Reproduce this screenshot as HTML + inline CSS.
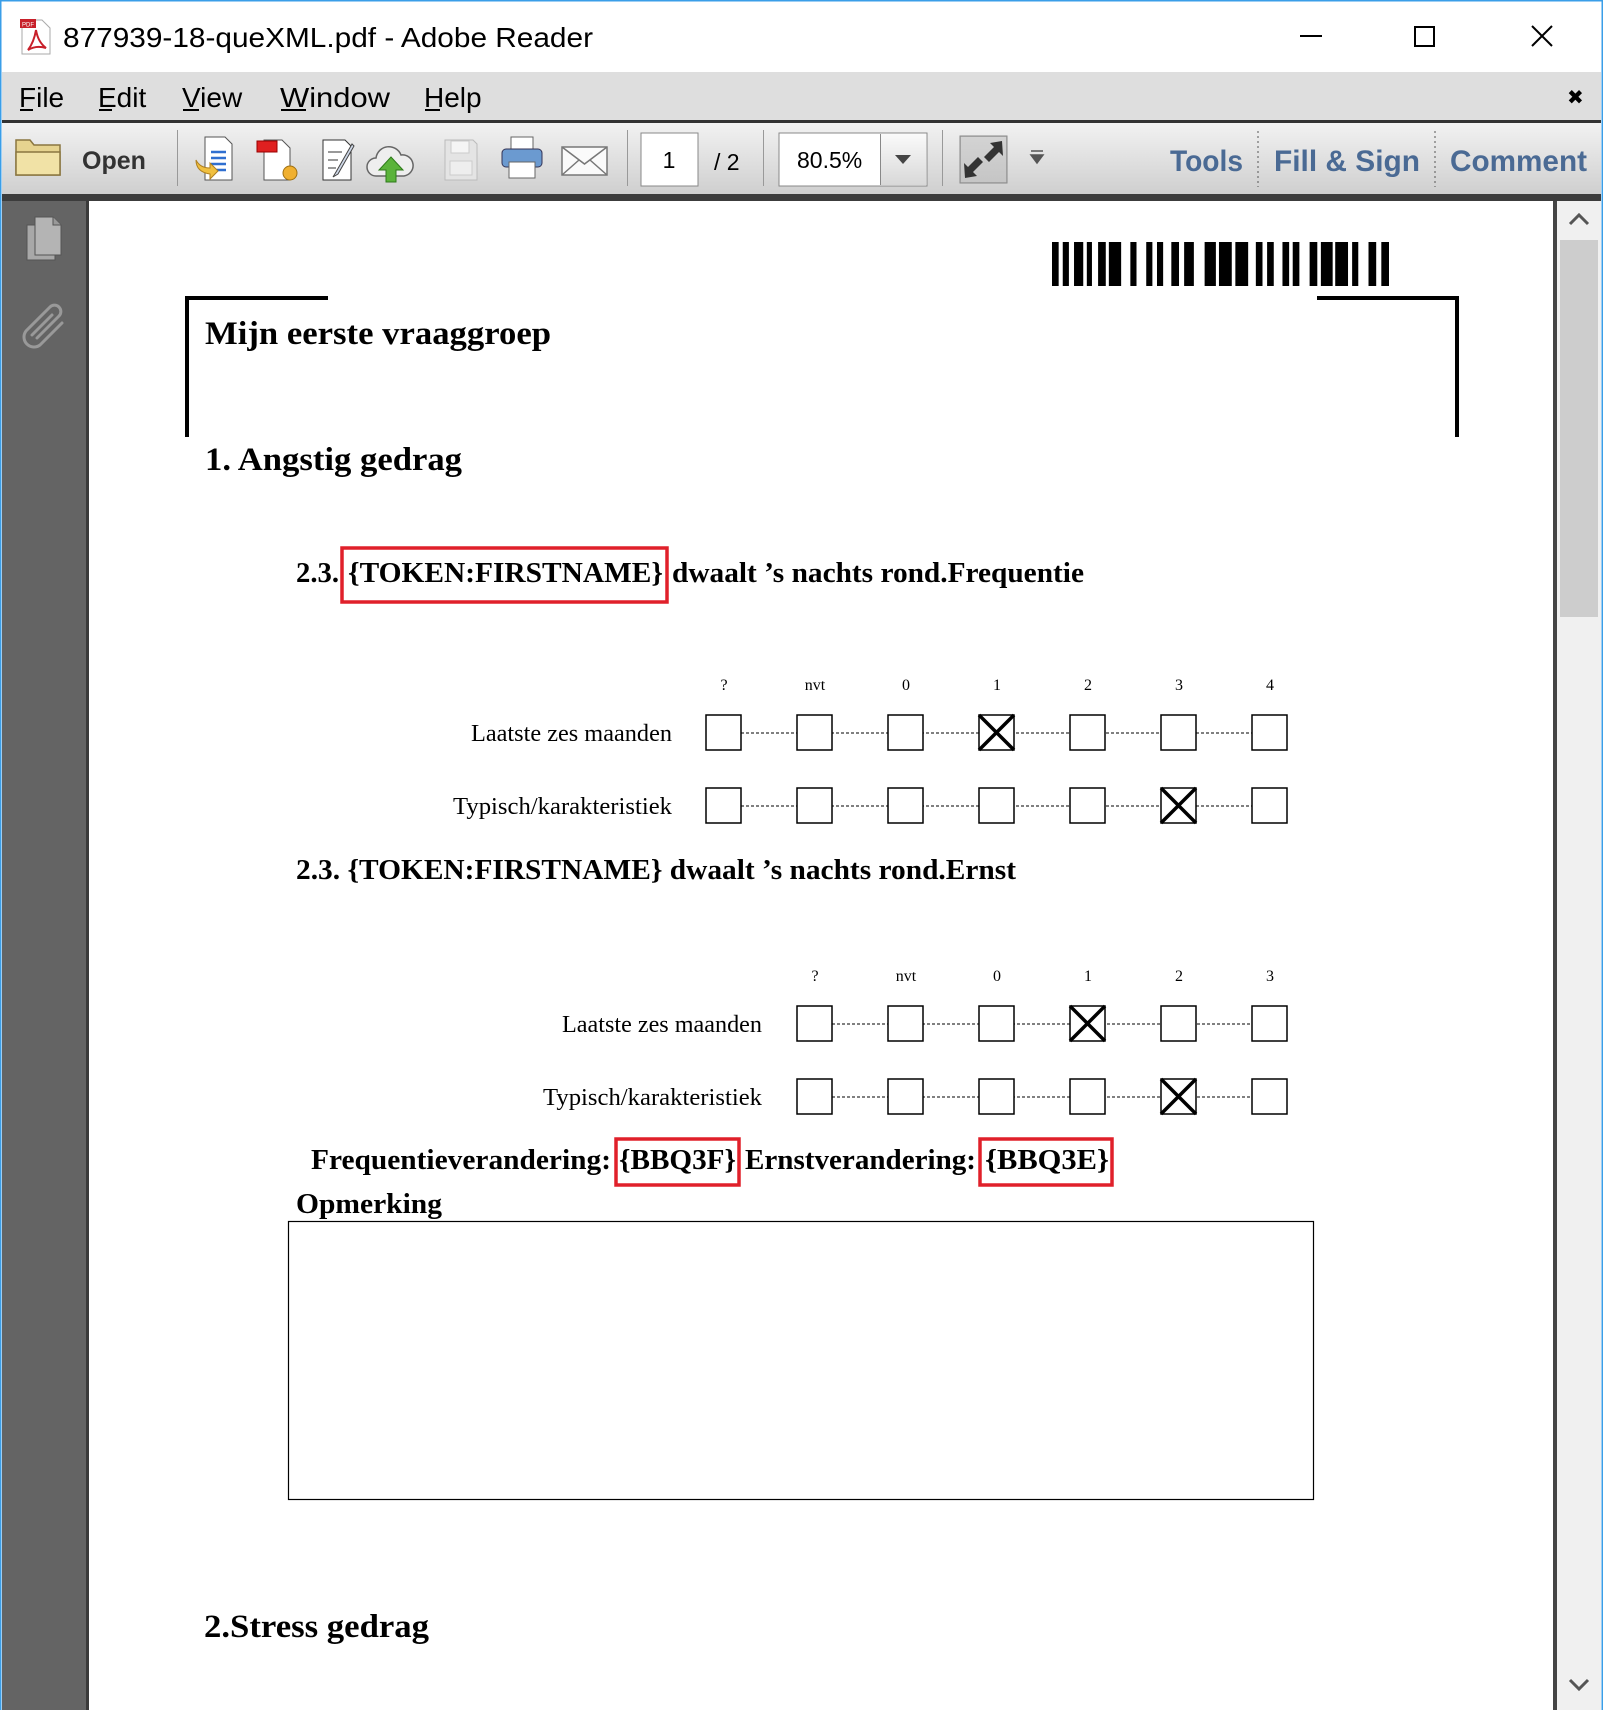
<!DOCTYPE html>
<html><head><meta charset="utf-8"><style>
html,body{margin:0;padding:0;width:1603px;height:1710px;overflow:hidden;background:#fff}
svg{display:block}
.ui{font-family:"Liberation Sans","DejaVu Sans",sans-serif}
.doc{font-family:"Liberation Serif",serif}
</style></head><body>
<svg width="1603" height="1710" viewBox="0 0 1603 1710" xmlns="http://www.w3.org/2000/svg">
<rect x="0" y="0" width="1603" height="1710" fill="#fff"/>
<rect x="0" y="0" width="1603" height="72" fill="#fff"/>
<g transform="translate(20,18)">
 <path d="M2 2 h20 l8 8 v26 h-28z" fill="#fff" stroke="#aaa"/>
 <rect x="0" y="1" width="16" height="9" fill="#c8202a"/>
 <text x="2" y="8.5" font-size="6" fill="#fff" class="ui">PDF</text>
 <path d="M8 32 q6 -8 8 -20 q2 12 10 18 q-10 -3 -18 2z" fill="none" stroke="#c8202a" stroke-width="2"/>
</g>
<text x="63" y="47" font-size="28" class="ui" fill="#000" textLength="530" lengthAdjust="spacingAndGlyphs">877939-18-queXML.pdf - Adobe Reader</text>
<rect x="1300" y="35" width="22" height="2" fill="#000"/>
<rect x="1415" y="27" width="19" height="19" fill="none" stroke="#000" stroke-width="2"/>
<path d="M1532 26 L1552 46 M1552 26 L1532 46" stroke="#000" stroke-width="2"/>
<rect x="2" y="72" width="1599" height="48" fill="#dedede"/>
<g class="ui" font-size="28" fill="#000">
 <text x="19" y="107">File</text><rect x="20" y="109" width="13" height="2"/>
 <text x="98" y="107">Edit</text><rect x="99" y="109" width="13" height="2"/>
 <text x="182" y="107">View</text><rect x="183" y="109" width="16" height="2"/>
 <text x="280" y="107" textLength="110" lengthAdjust="spacingAndGlyphs">Window</text><rect x="281" y="109" width="25" height="2"/>
 <text x="424" y="107">Help</text><rect x="425" y="109" width="15" height="2"/>
</g>
<text x="1567" y="104" font-size="20" font-weight="bold" class="ui" fill="#000">✖</text>
<defs>
<linearGradient id="tb" x1="0" y1="0" x2="0" y2="1"><stop offset="0" stop-color="#f2f2f2"/><stop offset="1" stop-color="#cfcfcf"/></linearGradient>
<linearGradient id="dd" x1="0" y1="0" x2="0" y2="1"><stop offset="0" stop-color="#fafafa"/><stop offset="1" stop-color="#d8d8d8"/></linearGradient>
</defs>
<rect x="2" y="120" width="1599" height="3" fill="#333"/>
<rect x="2" y="123" width="1599" height="71" fill="url(#tb)"/>
<rect x="2" y="194" width="1599" height="7" fill="#3c3c3c"/>
<path d="M16 140 h14 l4 5 h26 v30 h-44z" fill="#e6d38f" stroke="#8a7640" stroke-width="1.5"/>
<path d="M16 152 h44 v23 h-44z" fill="#f1e2a6" stroke="#8a7640" stroke-width="1.5"/>
<text x="82" y="169" font-size="25" font-weight="bold" class="ui" fill="#333">Open</text>
<rect x="177" y="130" width="1" height="56" fill="#999"/>
<g>
 <path d="M205 137 h20 l7 7 v36 h-27z" fill="#fff" stroke="#555"/>
 <path d="M211 152 h15 M211 158 h15 M211 164 h15 M211 170 h15" stroke="#2f6fd0" stroke-width="2.5"/>
 <path d="M196 160 q0 12 14 14 l0 5 l8 -8 l-8 -8 v5 q-10 0 -14 -8z" fill="#f0c040" stroke="#b08020"/>
 <path d="M264 140 h18 l8 8 v32 h-26z" fill="#fff" stroke="#555"/>
 <rect x="257" y="141" width="20" height="11" fill="#e02020" stroke="#900"/>
 <circle cx="290" cy="173" r="7" fill="#f0b030" stroke="#a07010"/>
 <path d="M323 140 h22 l6 6 v34 h-28z" fill="#fff" stroke="#333"/>
 <path d="M328 152 h14 M328 160 h10 M328 168 h8" stroke="#999" stroke-width="2"/>
 <path d="M352 144 l-16 28 l-3 5 l5 -3 l16 -28z" fill="#cfd8e8" stroke="#444"/>
 <path d="M388 176 h-12 a9 9 0 0 1 0 -18 a13 13 0 0 1 25 -3 a9 9 0 0 1 3 21 h-10" fill="#eee" stroke="#666" stroke-width="1.5"/>
 <path d="M396 182 v-12 h7 l-12 -13 l-12 13 h7 v12z" fill="#5ab33a" stroke="#2d7a1a"/>
 <path d="M445 140 h28 l4 4 v36 h-32z" fill="#e4e4e4" stroke="#bbb"/>
 <rect x="451" y="141" width="18" height="12" fill="#f5f5f5" stroke="#ccc"/>
 <rect x="450" y="161" width="22" height="14" fill="#eee" stroke="#ccc"/>
 <rect x="511" y="137" width="22" height="14" fill="#fff" stroke="#666"/>
 <rect x="502" y="149" width="40" height="18" rx="4" fill="#6b9ad0" stroke="#335"/>
 <rect x="509" y="162" width="26" height="16" fill="#fff" stroke="#666"/>
 <rect x="562" y="147" width="45" height="28" fill="#fafafa" stroke="#777" stroke-width="1.5"/>
 <path d="M562 147 l22.5 17 l22.5 -17 M562 175 l17 -15 M607 175 l-17 -15" fill="none" stroke="#777" stroke-width="1.5"/>
</g>
<rect x="627" y="130" width="1" height="56" fill="#999"/>
<rect x="641" y="133" width="57" height="53" fill="#fff" stroke="#888"/>
<text x="669" y="168" font-size="23" class="ui" text-anchor="middle" fill="#000">1</text>
<text x="714" y="170" font-size="23" class="ui" fill="#000">/  2</text>
<rect x="763" y="130" width="1" height="56" fill="#999"/>
<rect x="779" y="133" width="148" height="53" fill="#fff" stroke="#888"/>
<rect x="881" y="134" width="45" height="51" fill="url(#dd)"/>
<rect x="880" y="134" width="1" height="51" fill="#888"/>
<path d="M895 155 h16 l-8 9z" fill="#444"/>
<text x="797" y="168" font-size="23" class="ui" fill="#000">80.5%</text>
<rect x="942" y="130" width="1" height="56" fill="#999"/>
<rect x="960" y="136" width="47" height="47" fill="#b9b9b9" stroke="#888"/>
<rect x="961" y="137" width="45" height="45" fill="url(#dd)" opacity=".4"/>
<path d="M1002 141 l-12 2 l4 4 l-10 10 l5 5 l10 -10 l4 4z M965 178 l12 -2 l-4 -4 l10 -10 l-5 -5 l-10 10 l-4 -4z" fill="#333"/>
<path d="M1031 151 h12 M1031 155 h12 l-6 8z" stroke="#555" stroke-width="1.5" fill="#555"/>
<g class="ui" font-size="30" font-weight="bold" fill="#4a6a94">
 <text x="1170" y="171" textLength="73" lengthAdjust="spacingAndGlyphs">Tools</text>
 <text x="1274" y="171" textLength="146" lengthAdjust="spacingAndGlyphs">Fill &amp; Sign</text>
 <text x="1450" y="171" textLength="137" lengthAdjust="spacingAndGlyphs">Comment</text>
</g>
<path d="M1258 131 v56 M1435 131 v56" stroke="#555" stroke-dasharray="2 3"/>
<rect x="2" y="201" width="84" height="1509" fill="#646464"/>
<rect x="86" y="201" width="3" height="1509" fill="#3a3a3a"/>
<rect x="89" y="201" width="1464" height="1509" fill="#fff"/>
<rect x="1553" y="201" width="4" height="1509" fill="#444"/>
<rect x="1557" y="201" width="44" height="1509" fill="#f0f0f0"/>
<rect x="1560" y="240" width="38" height="377" fill="#cdcdcd"/>
<path d="M1570 224 l9 -9 l9 9" fill="none" stroke="#555" stroke-width="3"/>
<path d="M1570 1680 l9 9 l9 -9" fill="none" stroke="#555" stroke-width="3"/>
<rect x="27" y="225" width="28" height="35" fill="#a8a8a8" stroke="#555"/>
<path d="M35 217 h18 l8 8 v30 h-26z" fill="#b4b4b4" stroke="#555"/>
<path d="M53 217 v8 h8" fill="#999" stroke="#555"/>
<path d="M37 338 l22 -22 a6 6 0 0 0 -9 -9 l-24 24 a10 10 0 0 0 14 14 l22 -22 M32 335 l20 -20" fill="none" stroke="#999" stroke-width="3" stroke-linecap="round"/>
<rect x="0.5" y="0.5" width="1602" height="1712" fill="none" stroke="#3a9ee8" stroke-width="2"/>

<svg x="1052" y="242" width="337" height="44" viewBox="492 0 658 1" preserveAspectRatio="none">
<g fill="#000">
<rect x="492" y="0" width="13" height="1"/><rect x="513" y="0" width="12" height="1"/><rect x="535" y="0" width="18" height="1"/><rect x="560" y="0" width="10" height="1"/><rect x="582" y="0" width="15" height="1"/><rect x="603" y="0" width="24" height="1"/><rect x="645" y="0" width="12" height="1"/><rect x="676" y="0" width="12" height="1"/><rect x="697" y="0" width="12" height="1"/><rect x="725" y="0" width="15" height="1"/><rect x="750" y="0" width="19" height="1"/><rect x="790" y="0" width="22" height="1"/><rect x="818" y="0" width="25" height="1"/><rect x="850" y="0" width="25" height="1"/><rect x="890" y="0" width="13" height="1"/><rect x="912" y="0" width="13" height="1"/><rect x="942" y="0" width="13" height="1"/><rect x="962" y="0" width="13" height="1"/><rect x="995" y="0" width="15" height="1"/><rect x="1017" y="0" width="23" height="1"/><rect x="1045" y="0" width="25" height="1"/><rect x="1078" y="0" width="12" height="1"/><rect x="1110" y="0" width="15" height="1"/><rect x="1135" y="0" width="15" height="1"/>
</g></svg>
<path d="M187 437 V298 H328" fill="none" stroke="#000" stroke-width="4"/>
<path d="M1317 298 H1457 V437" fill="none" stroke="#000" stroke-width="4"/>
<g class="doc" font-weight="bold" fill="#000" lengthAdjust="spacingAndGlyphs">
 <text x="205" y="344" font-size="33" textLength="346" lengthAdjust="spacingAndGlyphs">Mijn eerste vraaggroep</text>
 <text x="205" y="470" font-size="33" textLength="257" lengthAdjust="spacingAndGlyphs">1. Angstig gedrag</text>
 <text x="296" y="582" font-size="28" textLength="43" lengthAdjust="spacingAndGlyphs">2.3.</text>
 <text x="348" y="582" font-size="28" textLength="315" lengthAdjust="spacingAndGlyphs">{TOKEN:FIRSTNAME}</text>
 <text x="672" y="582" font-size="28" textLength="412" lengthAdjust="spacingAndGlyphs">dwaalt ’s nachts rond.Frequentie</text>
 <text x="296" y="879" font-size="28" textLength="720" lengthAdjust="spacingAndGlyphs">2.3. {TOKEN:FIRSTNAME} dwaalt ’s nachts rond.Ernst</text>
 <text x="311" y="1169" font-size="28" textLength="300" lengthAdjust="spacingAndGlyphs">Frequentieverandering:</text>
 <text x="619" y="1169" font-size="28" textLength="117" lengthAdjust="spacingAndGlyphs">{BBQ3F}</text>
 <text x="745" y="1169" font-size="28" textLength="231" lengthAdjust="spacingAndGlyphs">Ernstverandering:</text>
 <text x="985" y="1169" font-size="28" textLength="124" lengthAdjust="spacingAndGlyphs">{BBQ3E}</text>
 <text x="296" y="1213" font-size="28" textLength="146" lengthAdjust="spacingAndGlyphs">Opmerking</text>
 <text x="204" y="1637" font-size="33" textLength="225" lengthAdjust="spacingAndGlyphs">2.Stress gedrag</text>
</g>
<rect x="342" y="548" width="325" height="54" fill="none" stroke="#e0202a" stroke-width="3.5"/>
<rect x="616" y="1139" width="123" height="46" fill="none" stroke="#e0202a" stroke-width="3.5"/>
<rect x="980" y="1139" width="132" height="46" fill="none" stroke="#e0202a" stroke-width="3.5"/>
<g class="doc" font-size="16" fill="#000" text-anchor="middle">
 <text x="724" y="690">?</text><text x="815" y="690">nvt</text><text x="906" y="690">0</text><text x="997" y="690">1</text><text x="1088" y="690">2</text><text x="1179" y="690">3</text><text x="1270" y="690">4</text>
 <text x="815" y="981">?</text><text x="906" y="981">nvt</text><text x="997" y="981">0</text><text x="1088" y="981">1</text><text x="1179" y="981">2</text><text x="1270" y="981">3</text>
</g>
<g class="doc" font-size="24" fill="#000">
 <text x="471" y="741" textLength="201" lengthAdjust="spacingAndGlyphs">Laatste zes maanden</text>
 <text x="453" y="814" textLength="219" lengthAdjust="spacingAndGlyphs">Typisch/karakteristiek</text>
 <text x="562" y="1032" textLength="200" lengthAdjust="spacingAndGlyphs">Laatste zes maanden</text>
 <text x="543" y="1105" textLength="219" lengthAdjust="spacingAndGlyphs">Typisch/karakteristiek</text>
</g>
<g stroke="#000" fill="none">
 <path d="M741 733 H1252 M741 806 H1252 M832 1024 H1252 M832 1097 H1252" stroke-dasharray="3 2" stroke-width="1"/>
</g>
<g fill="#fff" stroke="#000" stroke-width="1.5">
 <rect x="706" y="715" width="35" height="35"/><rect x="797" y="715" width="35" height="35"/><rect x="888" y="715" width="35" height="35"/><rect x="979" y="715" width="35" height="35"/><rect x="1070" y="715" width="35" height="35"/><rect x="1161" y="715" width="35" height="35"/><rect x="1252" y="715" width="35" height="35"/>
 <rect x="706" y="788" width="35" height="35"/><rect x="797" y="788" width="35" height="35"/><rect x="888" y="788" width="35" height="35"/><rect x="979" y="788" width="35" height="35"/><rect x="1070" y="788" width="35" height="35"/><rect x="1161" y="788" width="35" height="35"/><rect x="1252" y="788" width="35" height="35"/>
 <rect x="797" y="1006" width="35" height="35"/><rect x="888" y="1006" width="35" height="35"/><rect x="979" y="1006" width="35" height="35"/><rect x="1070" y="1006" width="35" height="35"/><rect x="1161" y="1006" width="35" height="35"/><rect x="1252" y="1006" width="35" height="35"/>
 <rect x="797" y="1079" width="35" height="35"/><rect x="888" y="1079" width="35" height="35"/><rect x="979" y="1079" width="35" height="35"/><rect x="1070" y="1079" width="35" height="35"/><rect x="1161" y="1079" width="35" height="35"/><rect x="1252" y="1079" width="35" height="35"/>
</g>
<g stroke="#000" stroke-width="3.5">
 <path d="M979 715 l35 35 M1014 715 l-35 35"/>
 <path d="M1161 788 l35 35 M1196 788 l-35 35"/>
 <path d="M1070 1006 l35 35 M1105 1006 l-35 35"/>
 <path d="M1161 1079 l35 35 M1196 1079 l-35 35"/>
</g>
<rect x="288.5" y="1221.5" width="1025" height="278" fill="none" stroke="#000" stroke-width="1.2"/>
</svg>
</body></html>
